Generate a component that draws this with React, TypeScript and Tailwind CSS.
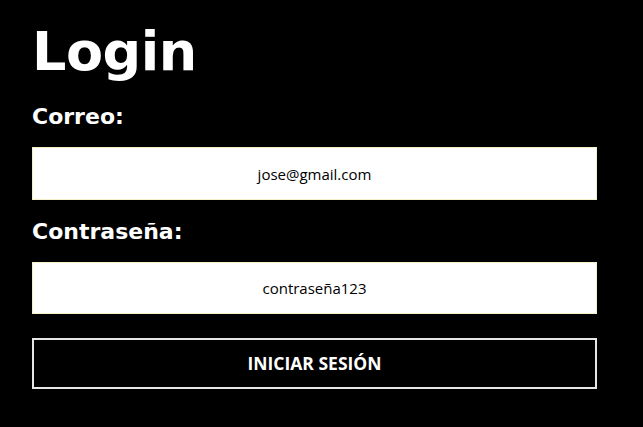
export default function App() {
  return (
    <div className="min-h-screen bg-black px-8 pt-[20px]">
      <form className="flex w-[565px] flex-col" onSubmit={(e) => e.preventDefault()}>
        <h1 className="font-['DejaVu_Sans',sans-serif] text-[54px] font-bold leading-[64px] tracking-[-0.5px] text-white">
          Login
        </h1>
        <label className="mt-[19px] font-['DejaVu_Sans',sans-serif] text-[22px] font-bold leading-[28px] text-white">
          Correo:
        </label>
        <input
          readOnly
          value="jose@gmail.com"
          className="mt-[16px] h-[53px] w-full border border-[#f3f0c8] bg-white text-center font-['Open_Sans',sans-serif] text-[15px] text-black outline-none"
        />
        <label className="mt-[18px] font-['DejaVu_Sans',sans-serif] text-[22px] font-bold leading-[28px] text-white">
          Contraseña:
        </label>
        <input
          readOnly
          value="contraseña123"
          className="mt-[16px] h-[52px] w-full border border-[#f3f0c8] bg-white text-center font-['Open_Sans',sans-serif] text-[15px] text-black outline-none"
        />
        <button
          type="submit"
          className="mt-[24px] h-[51px] w-full border-2 border-[#e6e6e6] bg-black font-['Open_Sans',sans-serif] text-[17.5px] font-bold text-white"
        >
          INICIAR SESIÓN
        </button>
      </form>
    </div>
  );
}
